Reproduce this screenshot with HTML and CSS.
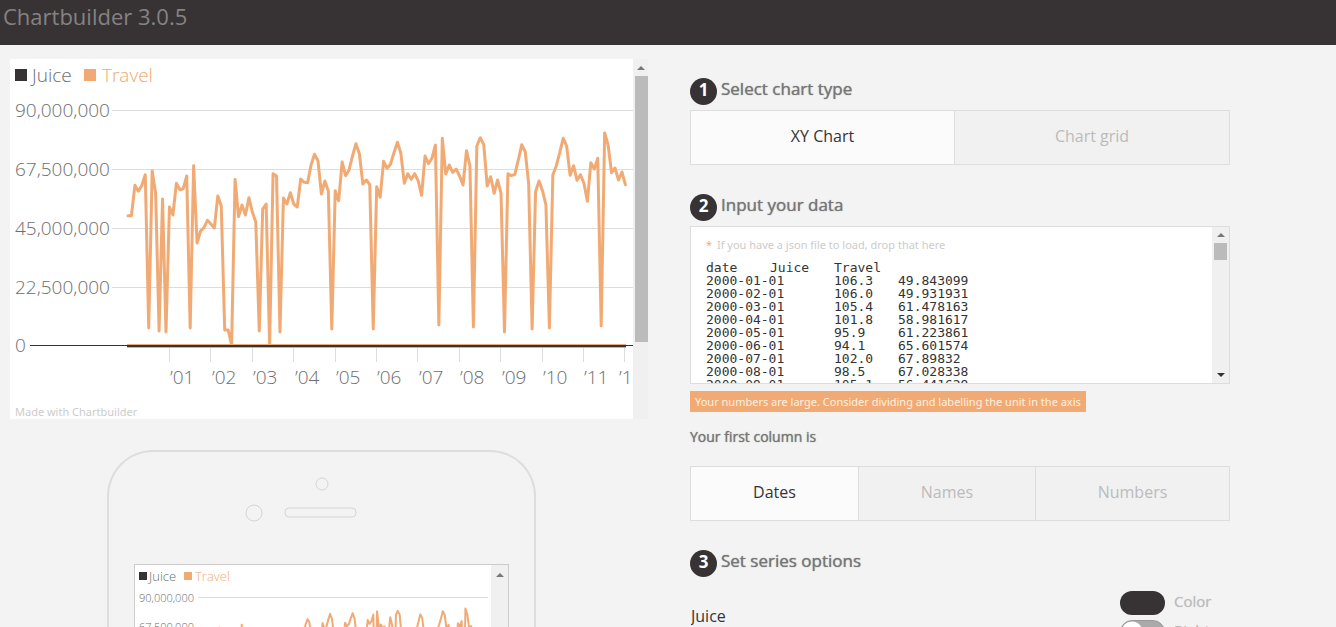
FILE: index.html
```html
<!DOCTYPE html>
<html lang="en">
<head>
<meta charset="utf-8">
<title>Chartbuilder 3.0.5</title>
<link rel="stylesheet" href="styles.css">
</head>
<body>
<header class="topbar"><h1 class="topbar-title">Chartbuilder 3.0.5</h1></header>
<main class="workspace">
  <section class="preview">
    <div class="chart-frame">
      <div class="chart-view">
        <svg class="chart" width="640" height="360" viewBox="10 59 640 360" role="img" aria-label="Juice and Travel by month">
          <rect class="juice" x="15" y="69" width="12" height="12"/>
          <text class="chart-text" x="32" y="82">Juice</text>
          <rect class="travel" x="84" y="69" width="12" height="12"/>
          <text class="chart-text travel" x="102" y="82">Travel</text>
          <path class="grid-line" d="M112 110.500H650M112 169.500H650M112 228.500H650M112 287.500H650M169.500 348V362M210.500 348V362M252.500 348V362M293.500 348V362M335.500 348V362M376.500 348V362M417.500 348V362M459.500 348V362M500.500 348V362M542.500 348V362M583.500 348V362M624.500 348V362"/>
          <g class="chart-text">
            <text x="15" y="117">90,000,000</text><text x="15" y="176">67,500,000</text><text x="15" y="235">45,000,000</text><text x="15" y="294">22,500,000</text><text x="15" y="352">0</text>
            <text x="170" y="384">’01</text><text x="212" y="384">’02</text><text x="253" y="384">’03</text><text x="295" y="384">’04</text><text x="336" y="384">’05</text><text x="377" y="384">’06</text><text x="419" y="384">’07</text><text x="460" y="384">’08</text><text x="502" y="384">’09</text><text x="543" y="384">’10</text><text x="584" y="384">’11</text><text x="619" y="384">’1</text>
          </g>
          <g class="travel-line" transform="translate(128 0) scale(3.454 1)">
            <polyline id="travel-series" vector-effect="non-scaling-stroke" points="0,215.7 1,215.7 2,185.3 3,191.3 4,185.5 5,174.7 6,328 7,171 8,193 9,331 10,199 11,332 12,207 13,215 14,183.3 15,189.7 16,188.7 17,176 18,328 19,165.7 20,243 21,231 22,227.7 23,220.3 24,224 25,228 26,196 27,206 28,330 29,330 30,345 31,179.5 32,216.7 33,205 34,215 35,197.7 36,212 37,222 38,331 39,209 40,204 41,345 42,173.7 43,176 44,332 45,198 46,204 47,192.7 48,204 49,207 50,179 51,182.3 52,182.7 53,165 54,154.3 55,160.7 56,194 57,181 58,191 59,329 60,190.7 61,200.7 62,162 63,175.7 64,170 65,156 66,143.7 67,154 68,184 69,180 70,184.7 71,329 72,186.7 73,197.3 74,161.3 75,168.3 76,164.3 77,152.7 78,142.3 79,153.3 80,183.3 81,173.7 82,179.3 83,173.7 84,180.7 85,195.3 86,156 87,163.7 88,158.3 89,145 90,325 91,138.3 92,174 93,165 94,172.3 95,169 96,176 97,185 98,150.7 99,166 100,327 101,146 102,137.7 103,144.7 104,186 105,176.7 106,193.3 107,180 108,193.3 109,332 110,173.7 111,175.7 112,174.3 113,160 114,144.7 115,151.7 116,183.3 117,329 118,191.7 119,181 120,190.7 121,205 122,328 123,175 124,165.7 125,152.7 126,138.3 127,146 128,175.3 129,165.7 130,180.3 131,174.7 132,183.3 133,201.3 134,162.7 135,169 136,158.3 137,326 138,133 139,145 140,172.7 141,168 142,180 143,172 144,184.7"/>
          </g>
          <path class="travel-base" d="M127 346H626"/>
          <path class="axis" d="M30 345.500H650"/>
          <path class="juice-line" d="M127 346H626"/>
          <text class="credit" x="15" y="416">Made with Chartbuilder</text>
        </svg>
      </div>
      <div class="scrollbar"><span class="arrow-up"></span><span class="thumb thumb-long"></span></div>
    </div>
    <div class="phone">
      <svg class="phone-top" width="424" height="112" viewBox="0 0 424 112" aria-hidden="true">
        <circle cx="213" cy="32" r="6"/><circle cx="145" cy="61" r="8"/><rect x="176" y="56" width="71" height="9" rx="4"/>
      </svg>
      <div class="phone-screen">
        <div class="chart-view">
          <svg class="chart" width="355" height="220" viewBox="135 565 355 220" role="img" aria-label="Mobile preview of the chart">
            <rect class="juice" x="139" y="572" width="8" height="8"/><text class="small-text" x="149" y="581">Juice</text>
            <rect class="travel" x="184" y="572" width="8" height="8"/><text class="small-text travel" x="195" y="581">Travel</text>
            <path class="grid-line" d="M198 597.500H488M198 627.500H488M198 656.500H488"/>
            <text class="small-label" x="139" y="602">90,000,000</text><text class="small-label" x="139" y="631">67,500,000</text>
            <g class="travel-line travel-small" transform="translate(206 542) scale(1.88 .5)"><use href="#travel-series"/></g>
          </svg>
        </div>
        <div class="scrollbar"><span class="arrow-up"></span></div>
      </div>
    </div>
  </section>

  <form class="editor">
    <section class="step">
      <h2 class="step-title"><span class="step-number">1</span>Select chart type</h2>
      <div class="button-group chart-types">
        <button type="button" class="option active">XY Chart</button><button type="button" class="option">Chart grid</button>
      </div>
    </section>
    <section class="step step-data">
      <h2 class="step-title"><label class="step-label" for="data"><span class="step-number">2</span>Input your data</label></h2>
      <div class="data-box">
        <div class="data-main">
          <p class="hint"><span class="star">*</span> If you have a json file to load, drop that here</p>
          <textarea class="data-input" id="data" spellcheck="false" wrap="off">date	Juice	Travel
2000-01-01	106.3	49.843099
2000-02-01	106.0	49.931931
2000-03-01	105.4	61.478163
2000-04-01	101.8	58.981617
2000-05-01	95.9	61.223861
2000-06-01	94.1	65.601574
2000-07-01	102.0	67.89832
2000-08-01	98.5	67.028338
2000-09-01	105.1	56.441629</textarea>
        </div>
        <div class="scrollbar"><span class="arrow-up"></span><span class="thumb"></span><span class="arrow-down"></span></div>
      </div>
      <p class="warning">Your numbers are large. Consider dividing and labelling the unit in the axis</p>
      <h3 class="subtitle">Your first column is</h3>
      <div class="button-group column-types">
        <button type="button" class="option active">Dates</button><button type="button" class="option">Names</button><button type="button" class="option">Numbers</button>
      </div>
    </section>
    <section class="step">
      <h2 class="step-title"><span class="step-number">3</span>Set series options</h2>
      <div class="series">
        <input class="series-name" type="text" value="Juice" aria-label="Series name">
        <div class="series-controls">
          <button type="button" class="swatch" id="color" aria-label="Juice color"></button><label for="color">Color</label>
          <input type="checkbox" class="toggle" id="axis-side"><label for="axis-side">Right</label>
        </div>
      </div>
    </section>
  </form>
</main>
</body>
</html>
```
FILE: styles.css
```css
* { box-sizing: border-box; }
body {
  margin: 0;
  height: 100vh;
  overflow: hidden;
  background: #f3f3f3;
  color: #333;
  font-family: "Open Sans", "Noto Sans", sans-serif;
}
h1, h2, h3, p { margin: 0; }
button, input, textarea { font-family: inherit; }

.topbar { height: 45px; padding: 0 3px; background: #373334; }
.topbar-title { color: #858283; font-size: 22px; line-height: 32px; font-weight: 400; }

.workspace {
  display: grid;
  grid-template-columns: 638fr 540fr;
  gap: 42px;
  padding: 14px 106px 0 10px;
}

.preview { min-width: 0; }
.chart-frame { display: flex; }
.chart-view { flex: 1; min-width: 0; overflow: hidden; background: #fff; }
.chart { display: block; }
.chart-text { font-size: 19px; font-weight: 300; fill: #6d6e71; }
.small-text { font-size: 13px; font-weight: 300; fill: #6d6e71; }
.small-label { font-size: 11px; font-weight: 300; fill: #6d6e71; }
.juice { fill: #373334; }
.travel { fill: #f1aa73; }
.grid-line { fill: none; stroke: #ddd; }
.travel-line { fill: none; stroke: #f1aa73; stroke-width: 3; stroke-linejoin: round; stroke-linecap: round; }
.travel-small { stroke-width: 2; }
.travel-base { stroke: #f1aa73; stroke-width: 4; }
.axis { stroke: #373334; }
.juice-line { stroke: #373334; stroke-width: 2; }
.credit { font-family: "Noto Sans", sans-serif; font-size: 11px; fill: #ccc; }

.scrollbar {
  width: 15px;
  flex: none;
  display: flex;
  flex-direction: column;
  align-items: center;
  background: #f0f0f0;
}
.arrow-up, .arrow-down { border: 4px solid transparent; }
.arrow-up { margin: 6px 0 6px; border-top: 0; border-bottom-color: #777; }
.arrow-down { margin: auto 0 6px; border-bottom: 0; border-top-color: #333; }
.thumb { width: 13px; height: 17px; background: #bbb; }
.thumb-long { height: 266px; }
.chart-frame .arrow-up { margin-top: 7px; }
.chart-frame .scrollbar { padding-left: 1px; }

.phone {
  width: 429px;
  margin: 31px auto 0 97px;
  border: 2px solid #ddd;
  border-bottom: 0;
  border-radius: 46px 46px 0 0;
}
.phone-top { display: block; fill: none; stroke: #d5d5d5; stroke-width: 1; }
.phone-screen { display: flex; margin: 0 25px; border: 1px solid #ccc; }
.phone-screen .scrollbar { width: 17px; }
.phone-screen .arrow-up { margin-top: 8px; }

.editor { min-width: 0; padding-top: 16px; }
.step { margin-bottom: 26px; }
.step-title {
  display: flex;
  align-items: center;
  height: 30px;
  margin-bottom: 5px;
  color: #777;
  font-size: 17px;
  line-height: 24px;
  font-weight: 400;
  text-shadow: 0 0 1px #777;
  padding-bottom: 2px;
}
.step-label { display: flex; align-items: center; }
.step-number {
  width: 27px;
  height: 27px;
  margin: 5px 4px 0 0;
  border-radius: 50%;
  background: #373334;
  color: #fff;
  font-size: 17px;
  line-height: 24px;
  font-weight: 700;
  text-align: center;
  text-shadow: none;
}

.button-group { display: grid; height: 55px; border: 1px solid #ddd; }
.chart-types { grid-template-columns: 263fr 275fr; }
.column-types { grid-template-columns: 167fr 177fr 194fr; }
.option {
  padding: 0 0 3px;
  border: 0;
  border-left: 1px solid #ddd;
  background: #f1f1f1;
  color: #bbb;
  font-size: 16px;
}
.option:first-child { border-left: 0; }
.active { background: #fbfbfb; color: #373334; }

.data-box { display: flex; height: 158px; border: 1px solid #ddd; background: #fff; }
.data-main { flex: 1; min-width: 0; padding: 9px 0 0 15px; }
.data-box .scrollbar { width: 17px; }
.hint { color: #ccc; font-family: "Noto Sans", sans-serif; font-size: 11px; line-height: 18px; }
.star { margin-right: 2px; color: #f1aa73; }
.data-input {
  display: block;
  width: 100%;
  height: 122px;
  margin-top: 7px;
  padding: 0;
  border: 0;
  overflow: hidden;
  resize: none;
  background: none;
  color: #333;
  font: 13px/13px "DejaVu Sans Mono", monospace;
  tab-size: 64px;
}
.warning {
  width: fit-content;
  margin-top: 7px;
  padding: 0 5px;
  background: #f1aa73;
  color: #fff1e0;
  font-family: "Noto Sans", sans-serif;
  font-size: 11px;
  line-height: 21px;
}
.subtitle {
  margin: 15px 0 19px;
  color: #777;
  font-size: 14px;
  line-height: 20px;
  font-weight: 400;
  text-shadow: 0 0 1px #777;
}

.series { display: flex; justify-content: space-between; padding: 9px 0 0 1px; }
.series-name {
  width: 200px;
  height: 24px;
  margin-top: 13px;
  padding: 0;
  border: 0;
  background: none;
  color: #373334;
  font-size: 16px;
}
.series-controls {
  display: grid;
  grid-template-columns: 45px 56px;
  gap: 5px 9px;
  color: #bbb;
  font-size: 15px;
  line-height: 20px;
  text-shadow: 0 0 1px #ccc;
}
.swatch { height: 24px; padding: 0; border: 0; border-radius: 12px; background: #373334; }
.toggle {
  appearance: none;
  width: 45px;
  height: 24px;
  margin: 0;
  border: 1px solid #999;
  border-radius: 12px;
  background: radial-gradient(circle at 11px 11px, #fff 10px, #aaa 11px);
}
```
